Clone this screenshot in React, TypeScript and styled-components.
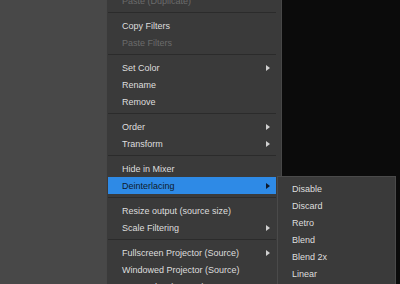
import React from "react";
import styled, { createGlobalStyle } from "styled-components";

const Global = createGlobalStyle`
  html, body { margin: 0; padding: 0; background: #0b0b0b; }
  body { font-family: "Liberation Sans", Arial, sans-serif; }
`;

const Screen = styled.div`
  position: relative;
  width: 400px;
  height: 284px;
  overflow: hidden;
  display: flex;
`;

const SourcesPane = styled.div`
  width: 282px;
  flex: none;
  background: #484848;
`;

const Preview = styled.div`
  flex: 1;
  background: #0b0b0b;
`;

const Menu = styled.div`
  position: absolute;
  left: 106px;
  top: -12px;
  width: 176px;
  box-sizing: border-box;
  background: #3a3a3a;
  border: 1px solid #474747;
  padding: 3px 5px 3px 1px;
  display: flex;
  flex-direction: column;
`;

const Item = styled.div<{ $disabled?: boolean; $active?: boolean }>`
  position: relative;
  height: 17px;
  display: flex;
  align-items: center;
  padding-left: 14px;
  font-size: 9px;
  color: ${(p) => (p.$active ? "#0e1a2c" : p.$disabled ? "#6b6b6b" : "#dedede")};
  background: ${(p) => (p.$active ? "#2e8ae6" : "transparent")};
  white-space: nowrap;
`;

const Label = styled.span`
  flex: 1;
`;

const Arrow = styled.svg`
  width: 4px;
  height: 6px;
  margin-right: 6px;
  flex: none;
`;

const Separator = styled.div`
  height: 1px;
  margin: 3px 0 4px;
  background: #2b2b2b;
`;

const SubMenu = styled.div`
  position: absolute;
  left: 169px;
  top: -1px;
  width: 119px;
  box-sizing: border-box;
  background: #3a3a3a;
  border: 1px solid #4a4a4a;
  padding: 3px 0;
  display: flex;
  flex-direction: column;
`;

const SubItem = styled.div`
  height: 17px;
  display: flex;
  align-items: center;
  padding-left: 14px;
  font-size: 9px;
  color: #dedede;
  white-space: nowrap;
`;

type Entry =
  | { sep: true }
  | { label: string; disabled?: boolean; sub?: boolean; active?: boolean };

const entries: Entry[] = [
  { label: "Paste (Duplicate)", disabled: true },
  { sep: true },
  { label: "Copy Filters" },
  { label: "Paste Filters", disabled: true },
  { sep: true },
  { label: "Set Color", sub: true },
  { label: "Rename" },
  { label: "Remove" },
  { sep: true },
  { label: "Order", sub: true },
  { label: "Transform", sub: true },
  { sep: true },
  { label: "Hide in Mixer" },
  { label: "Deinterlacing", sub: true, active: true },
  { sep: true },
  { label: "Resize output (source size)" },
  { label: "Scale Filtering", sub: true },
  { sep: true },
  { label: "Fullscreen Projector (Source)", sub: true },
  { label: "Windowed Projector (Source)" },
  { label: "Screenshot (Source)" },
];

const deinterlace = ["Disable", "Discard", "Retro", "Blend", "Blend 2x", "Linear"];

const SubArrow: React.FC<{ color: string }> = ({ color }) => (
  <Arrow viewBox="0 0 4 6">
    <path d="M0 0 L4 3 L0 6 Z" fill={color} />
  </Arrow>
);

export default function App() {
  return (
    <>
      <Global />
      <Screen>
        <SourcesPane />
        <Preview />
        <Menu>
          {entries.map((e, i) =>
            "sep" in e ? (
              <Separator key={i} />
            ) : (
              <Item key={i} $disabled={e.disabled} $active={e.active}>
                <Label>{e.label}</Label>
                {e.sub && <SubArrow color={e.active ? "#0e1a2c" : "#d0d0d0"} />}
                {e.active && (
                  <SubMenu>
                    {deinterlace.map((d) => (
                      <SubItem key={d}>{d}</SubItem>
                    ))}
                  </SubMenu>
                )}
              </Item>
            )
          )}
        </Menu>
      </Screen>
    </>
  );
}
